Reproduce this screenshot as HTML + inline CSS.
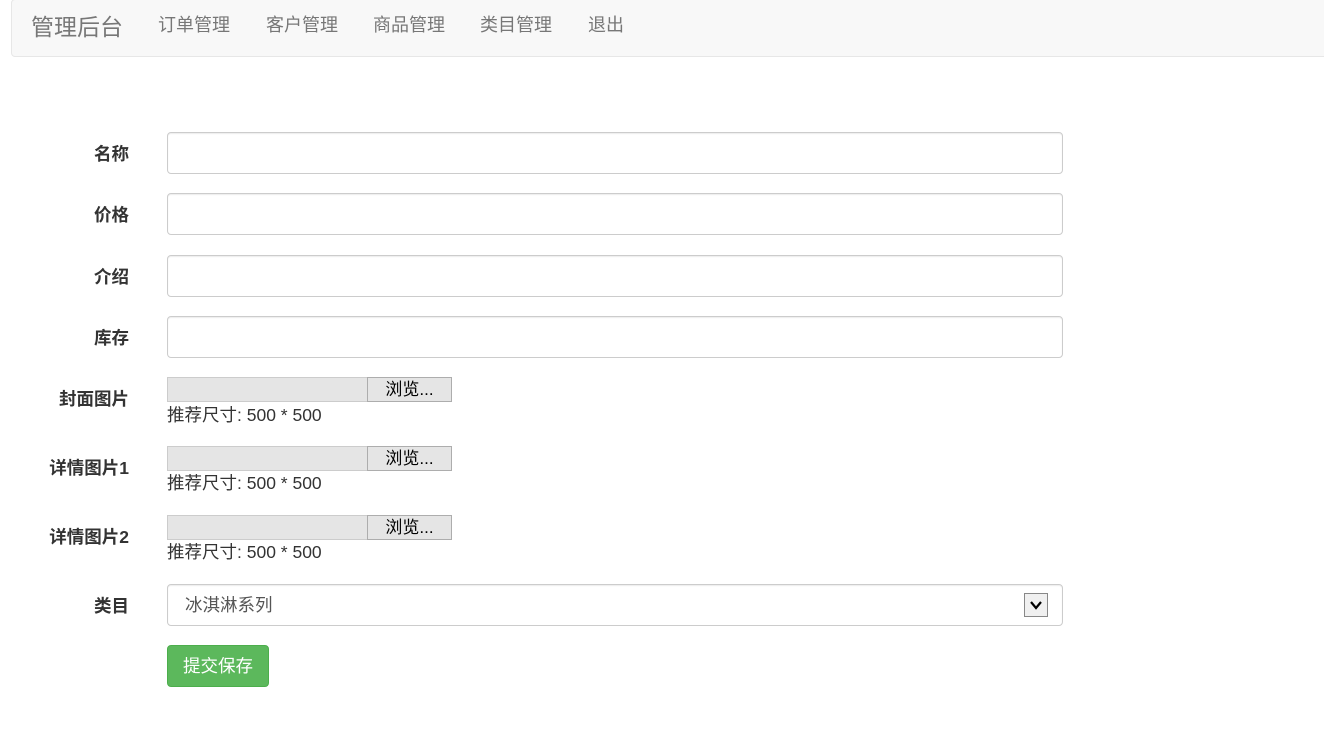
<!DOCTYPE html>
<html><head><meta charset="utf-8"><style>
body{margin:0;width:1324px;height:748px;background:#fff;font-family:"Liberation Sans","Noto Sans CJK SC",sans-serif;color:#333;position:relative;overflow:hidden}
.nav{position:absolute;left:11px;top:-1px;width:1330px;height:56px;background:#f8f8f8;border:1px solid #e7e7e7;border-radius:4px}
.brand{position:absolute;left:31px;top:8px;font-size:23px;color:#777}
.link{position:absolute;top:11px;font-size:18px;color:#777}
.lbl{position:absolute;right:1195px;font-size:17.5px;font-weight:bold;color:#333;white-space:nowrap}
.inp{position:absolute;left:167px;width:894px;height:40px;border:1px solid #ccc;border-radius:4px;box-shadow:inset 0 1px 1px rgba(0,0,0,.075)}
.file{position:absolute;left:167px;width:199px;height:23px;background:#e5e5e5;border:1px solid #ccc}
.fbtn{position:absolute;left:367px;width:83px;height:23px;background:#e5e5e5;border:1px solid #adadad;font-size:17px;text-align:center;line-height:23px;color:#000}
.hint{position:absolute;left:167px;font-size:17.5px;color:#333}
</style></head><body>
<div class="nav"></div>
<div class="brand">管理后台</div>
<div class="link" style="left:158px">订单管理</div>
<div class="link" style="left:266px">客户管理</div>
<div class="link" style="left:373px">商品管理</div>
<div class="link" style="left:480px">类目管理</div>
<div class="link" style="left:588px">退出</div>

<div class="lbl" style="top:141px">名称</div><div class="inp" style="top:132px"></div>
<div class="lbl" style="top:202px">价格</div><div class="inp" style="top:193px"></div>
<div class="lbl" style="top:264px">介绍</div><div class="inp" style="top:255px"></div>
<div class="lbl" style="top:325px">库存</div><div class="inp" style="top:316px"></div>

<div class="lbl" style="top:386px">封面图片</div>
<div class="file" style="top:377px"></div><div class="fbtn" style="top:377px">浏览...</div>
<div class="hint" style="top:402px">推荐尺寸: 500 * 500</div>

<div class="lbl" style="top:455px">详情图片1</div>
<div class="file" style="top:446px"></div><div class="fbtn" style="top:446px">浏览...</div>
<div class="hint" style="top:470px">推荐尺寸: 500 * 500</div>

<div class="lbl" style="top:524px">详情图片2</div>
<div class="file" style="top:515px"></div><div class="fbtn" style="top:515px">浏览...</div>
<div class="hint" style="top:539px">推荐尺寸: 500 * 500</div>

<div class="lbl" style="top:593px">类目</div>
<div class="inp" style="top:584px"></div>
<div style="position:absolute;left:185px;top:592px;font-size:17.5px;color:#555">冰淇淋系列</div>
<div style="position:absolute;left:1024px;top:593px;width:22px;height:22px;border:1px solid #888;background:#f0f0f0"><svg width="22" height="22"><path d="M6 8 L11 14 L16 8" stroke="#000" stroke-width="2.2" fill="none"/></svg></div>

<div style="position:absolute;left:167px;top:645px;width:100px;height:40px;background:#5cb85c;border:1px solid #4cae4c;border-radius:4px;color:#fff;font-size:17.5px;text-align:center;line-height:40px">提交保存</div>
</body></html>
